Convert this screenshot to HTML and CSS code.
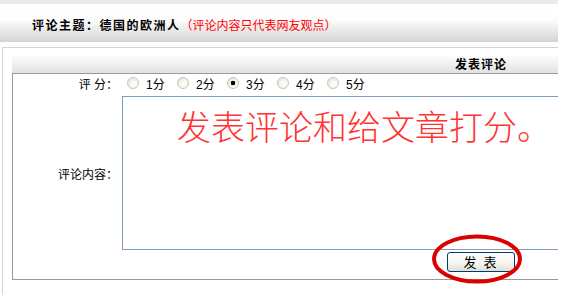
FILE: index.html
```html
<!DOCTYPE html>
<html lang="zh-CN">
<head>
    <meta charset="UTF-8">
    <title>发表评论</title>
    <link rel="stylesheet" href="styles.css">
</head>
<body>
    <div class="page">
        <div class="topbar"></div>
        <div class="header">
            <span class="subject">评论主题：德国的欧洲人</span><span class="note">（评论内容只代表网友观点）</span>
        </div>

        <div class="panel">
            <div class="panel-title">发表评论</div>
            <div class="form">
                <div class="row row-score">
                    <span class="label">评&nbsp;分：</span>
                    <label class="opt"><input type="radio" name="score"><span>1分</span></label>
                    <label class="opt"><input type="radio" name="score"><span>2分</span></label>
                    <label class="opt"><input type="radio" name="score" checked><span>3分</span></label>
                    <label class="opt"><input type="radio" name="score"><span>4分</span></label>
                    <label class="opt"><input type="radio" name="score"><span>5分</span></label>
                </div>
                <div class="row row-content">
                    <span class="label">评论内容：</span>
                    <div class="textarea"><span class="hint">发表评论和给文章打分。</span></div>
                </div>
                <div class="row row-submit">
                    <span class="submit-wrap">
                        <button class="submit">发&nbsp;表</button>
                        <svg class="mark" width="92" height="52" viewBox="0 0 92 52">
                            <ellipse cx="46" cy="25" rx="43" ry="22.5" fill="none" stroke="#dd0000" stroke-width="4"/>
                        </svg>
                    </span>
                </div>
            </div>
        </div>
    </div>
</body>
</html>
```

FILE: styles.css
```css
body {
    margin: 0;
    background-color: #fff;
    color: #000;
    font-family: "Liberation Sans", "Noto Sans CJK SC", sans-serif;
    font-size: 12px;
}
.page {
    width: 558px;
    height: 295px;
    overflow: hidden;
}
.topbar {
    height: 4px;
    background-color: #ebebeb;
    margin-bottom: 6px;
}
.header {
    height: 32px;
    box-sizing: border-box;
    padding: 0 0 4px 32px;
    display: flex;
    align-items: center;
    background: linear-gradient(#ffffff 0%, #fdfdfd 30%, #d4d4d4 100%);
    white-space: nowrap;
}
.header .subject {
    font-weight: bold;
    letter-spacing: 1.5px;
}
.header .note {
    color: #ff0000;
}
.panel {
    margin: 5px 0 0 2px;
    height: 248px;
    border-top: 1px solid #d4d4d4;
    border-left: 1px solid #d4d4d4;
    padding-left: 9px;
}
.panel-title {
    height: 26px;
    box-sizing: border-box;
    padding: 10px 0 0 443px;
    line-height: 14px;
    font-weight: bold;
    letter-spacing: 1px;
    background: linear-gradient(#ffffff 0%, #ffffff 25%, #e2e2e2 100%);
    border-bottom: 1px solid #999;
}
.form {
    width: 620px;
    border-left: 1px solid #999;
    border-bottom: 1px solid #999;
}
.row {
    display: flex;
}
.label {
    width: 109px;
    box-sizing: border-box;
    padding-right: 4px;
    text-align: right;
    flex-shrink: 0;
}
.row-score {
    height: 22px;
    box-sizing: border-box;
    padding-bottom: 4px;
    align-items: center;
}
.opt {
    width: 50px;
    display: flex;
    align-items: center;
}
.opt input {
    appearance: none;
    -webkit-appearance: none;
    width: 12px;
    height: 12px;
    margin: 0 7px 0 5px;
    border-radius: 50%;
    border: 1px solid #c9c6b6;
    background: radial-gradient(circle at 60% 60%, #ffffff 0%, #f6f5ef 45%, #dcd9c8 100%);
}
.opt input:checked {
    background: radial-gradient(circle, #000 0, #000 2px, transparent 2.6px),
                radial-gradient(circle at 60% 60%, #ffffff 0%, #f6f5ef 45%, #dcd9c8 100%);
}
.row-content {
    align-items: center;
}
.textarea {
    width: 480px;
    height: 152px;
    border: 1px solid #7f9db9;
    box-sizing: content-box;
}
.hint {
    display: block;
    padding: 12px 0 0 54px;
    font-family: "Noto Sans CJK SC", sans-serif;
    font-weight: 300;
    font-size: 34px;
    line-height: 34px;
    color: #ff3333;
    white-space: nowrap;
}
.row-submit {
    height: 29px;
    padding-left: 434px;
}
.submit-wrap {
    position: relative;
    display: block;
    margin-top: 2px;
}
.submit {
    width: 68px;
    height: 20px;
    padding: 0;
    border: 1px solid #003c74;
    border-radius: 3px;
    background: linear-gradient(#ffffff 0%, #f4f3ee 60%, #e2dfd3 100%);
    font-family: "Noto Sans CJK SC", sans-serif;
    font-size: 13px;
    line-height: 18px;
    letter-spacing: 2px;
    color: #000;
}
.mark {
    position: absolute;
    left: -16px;
    top: -18px;
}
```
